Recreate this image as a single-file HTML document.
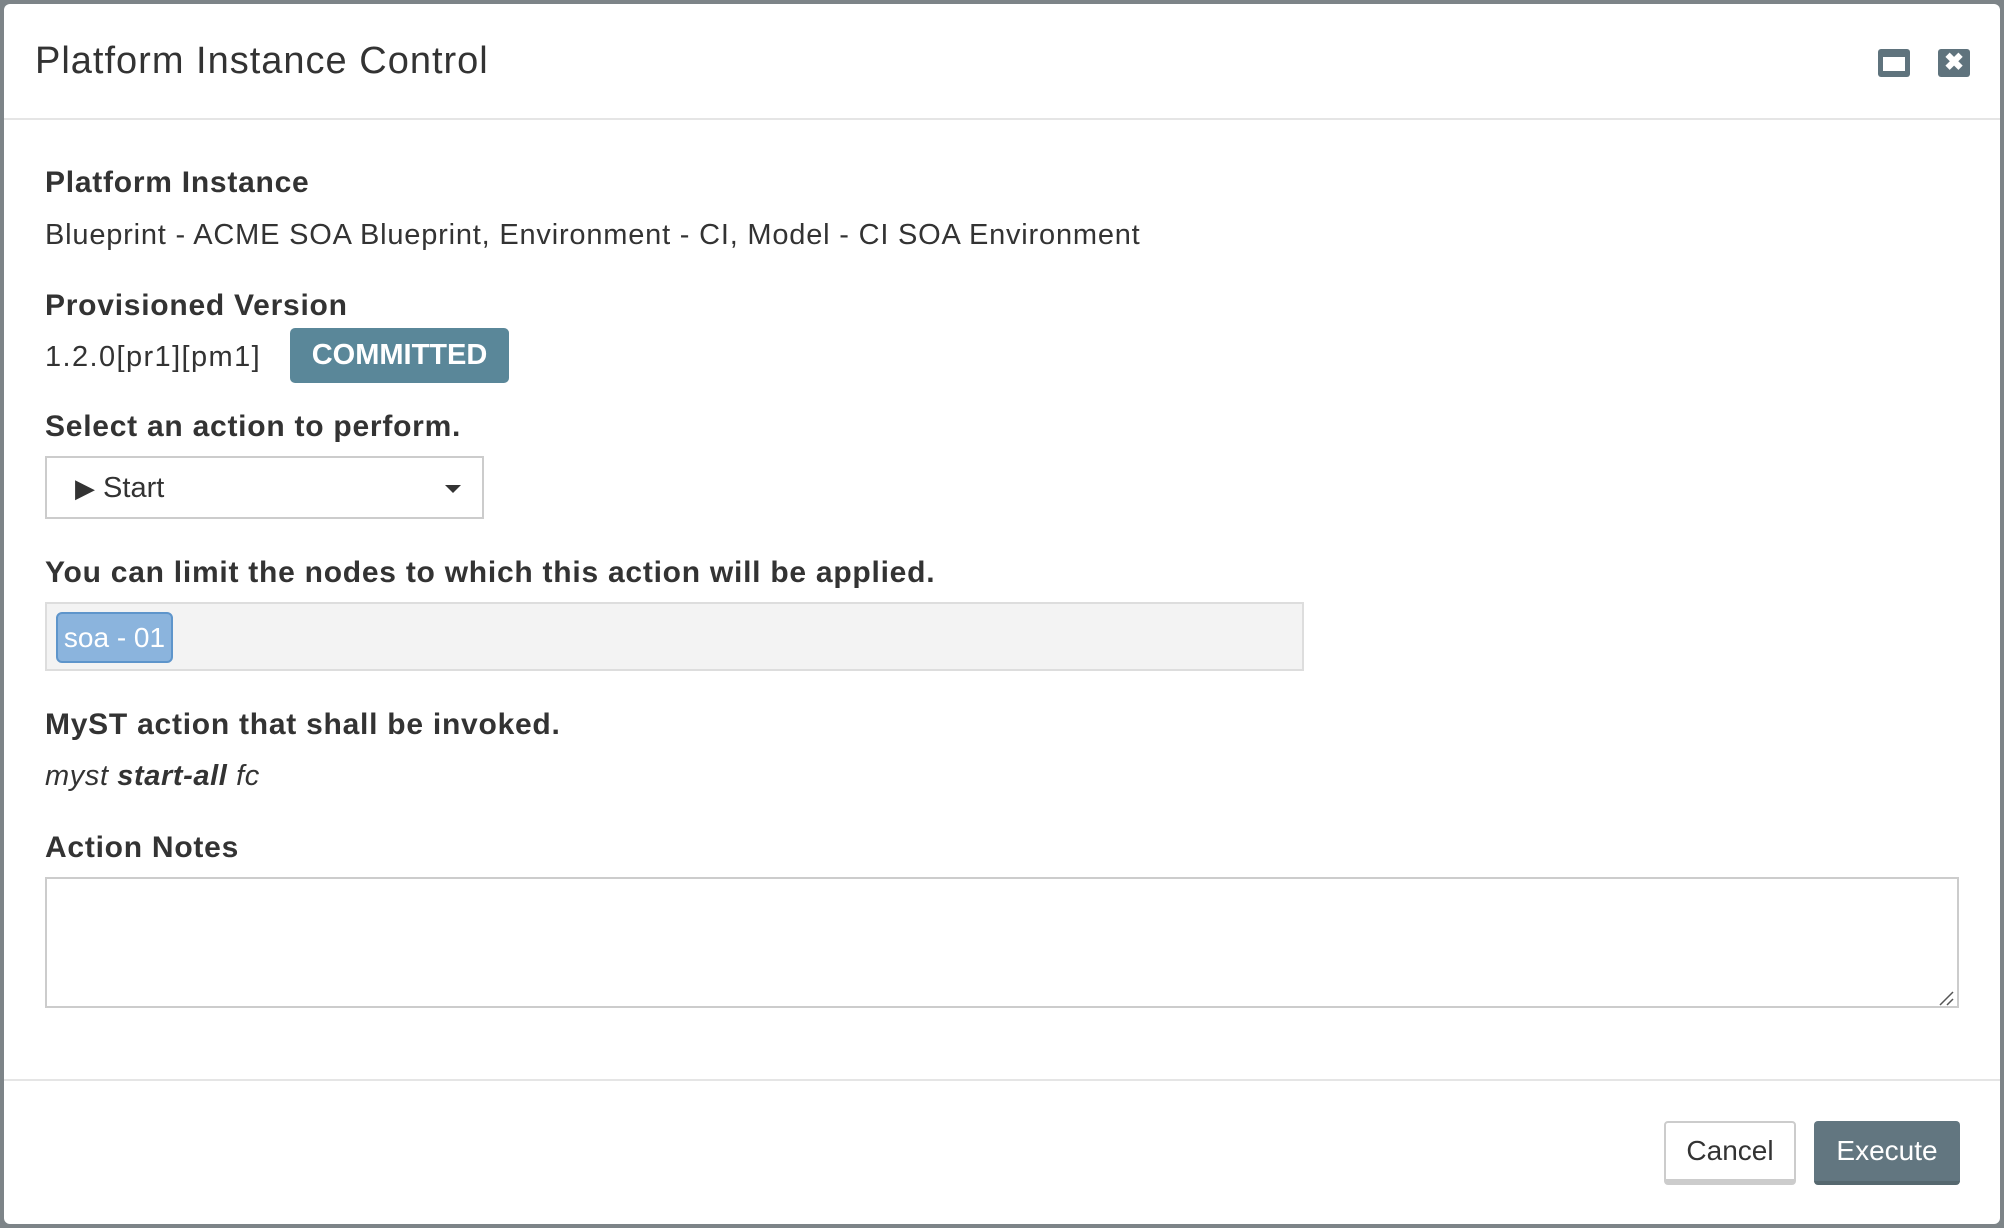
<!DOCTYPE html>
<html><head><meta charset="utf-8"><style>
*{margin:0;padding:0;box-sizing:border-box}
body{width:2004px;height:1228px;background:#7d8488;position:relative;overflow:hidden;font-family:"Liberation Sans",sans-serif;color:#333}
.modal{position:absolute;left:4px;top:4px;width:1996px;height:1220px;background:#fff;border-radius:6px}
.a{position:absolute;white-space:nowrap}
.lbl{font-weight:bold;font-size:30px;color:#333;letter-spacing:0.75px}
.txt{font-size:29px;color:#333}
</style></head><body>
<div class="modal">
<div class="a" style="left:31px;top:36px;font-size:38px;color:#333;letter-spacing:1px">Platform Instance Control</div>
<div class="a" style="left:1874px;top:45px;width:32px;height:28px;background:#5f737d;border-radius:3px"><div style="position:absolute;left:5px;top:8px;width:22px;height:14px;background:#fff"></div></div>
<div class="a" style="left:1934px;top:45px;width:32px;height:28px;background:#5f737d;border-radius:3px;color:#fff;font-weight:bold;font-size:24px;line-height:28px;text-align:center">✖</div>
<div class="a" style="left:0;top:114px;width:1996px;height:2px;background:#e5e5e5"></div>

<div class="a lbl" style="left:41px;top:162px">Platform Instance</div>
<div class="a txt" style="left:41px;top:215px;letter-spacing:0.8px">Blueprint - ACME SOA Blueprint, Environment - CI, Model - CI SOA Environment</div>
<div class="a lbl" style="left:41px;top:285px">Provisioned Version</div>
<div class="a txt" style="left:41px;top:337px;letter-spacing:1.4px">1.2.0[pr1][pm1]</div>
<div class="a" style="left:286px;top:324px;width:219px;height:55px;background:#5a8799;border-radius:5px;color:#fff;font-weight:bold;font-size:29px;line-height:55px;text-align:center">COMMITTED</div>
<div class="a lbl" style="left:41px;top:406px">Select an action to perform.</div>
<div class="a" style="left:41px;top:452px;width:439px;height:63px;border:2px solid #ccc;background:#fff"></div>
<div class="a txt" style="left:71px;top:468px"><span style="font-size:26px">▶</span> Start</div>
<div class="a" style="left:441px;top:481px;width:0;height:0;border-left:8px solid transparent;border-right:8px solid transparent;border-top:8px solid #333"></div>
<div class="a lbl" style="left:41px;top:552px">You can limit the nodes to which this action will be applied.</div>
<div class="a" style="left:41px;top:598px;width:1259px;height:69px;background:#f3f3f3;border:2px solid #ddd"></div>
<div class="a" style="left:52px;top:608px;width:117px;height:51px;background:#8bb4dd;border:2px solid #5e95cb;border-radius:6px;color:#fff;font-size:28px;line-height:47px;text-align:center">soa - 01</div>
<div class="a lbl" style="left:41px;top:704px">MyST action that shall be invoked.</div>
<div class="a txt" style="left:41px;top:756px;font-style:italic;letter-spacing:0.6px">myst <b>start-all</b> fc</div>
<div class="a lbl" style="left:41px;top:827px">Action Notes</div>
<div class="a" style="left:41px;top:873px;width:1914px;height:131px;border:2px solid #ccc;background:#fff"></div>
<svg class="a" style="left:1934px;top:986px" width="16" height="16"><path d="M2 15L15 2M9 15L15 9" stroke="#555" stroke-width="1.5"/></svg>
<div class="a" style="left:0;top:1075px;width:1996px;height:2px;background:#e5e5e5"></div>
<div class="a" style="left:1660px;top:1117px;width:132px;height:64px;border:2px solid #ccc;border-bottom-width:6px;border-radius:4px;background:#fff;font-size:28px;line-height:56px;text-align:center;color:#333">Cancel</div>
<div class="a" style="left:1810px;top:1117px;width:146px;height:64px;border-radius:4px;background:#627680;border-bottom:4px solid #56686f;font-size:28px;line-height:60px;text-align:center;color:#fff">Execute</div>
</div>
</body></html>
